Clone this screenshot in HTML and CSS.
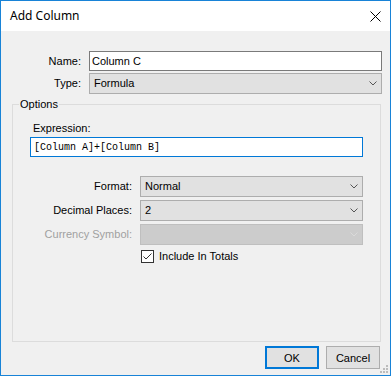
FILE: index.html
```html
<!DOCTYPE html>
<html lang="en">
<head>
    <meta charset="UTF-8">
    <title>Add Column</title>
    <link rel="stylesheet" href="styles.css">
</head>
<body>
    <div class="window">
        <div class="titlebar">
            <span class="title">Add Column</span>
            <svg class="close" width="11" height="11" viewBox="0 0 11 11">
                <path d="M0.5 0.5 L10.5 10.5 M10.5 0.5 L0.5 10.5" stroke="#000" stroke-width="1" fill="none"/>
            </svg>
        </div>

        <div class="content">
            <div class="top-grid">
                <label class="lbl">Name:</label>
                <input class="textbox" type="text" value="Column C">
                <label class="lbl">Type:</label>
                <div class="combo">
                    <span>Formula</span>
                    <svg class="chevron" width="8" height="5" viewBox="0 0 8 5"><path d="M0.5 0.5 L4 4 L7.5 0.5" stroke="currentColor" fill="none"/></svg>
                </div>
            </div>

            <!-- options group -->
            <fieldset class="group">
                <legend>Options</legend>
                <div class="group-inner">
                    <div class="expr-label">Expression:</div>
                    <input class="textbox mono focused" type="text" value="[Column A]+[Column B]">

                    <div class="opt-grid">
                        <label class="lbl">Format:</label>
                        <div class="combo">
                            <span>Normal</span>
                            <svg class="chevron" width="8" height="5" viewBox="0 0 8 5"><path d="M0.5 0.5 L4 4 L7.5 0.5" stroke="currentColor" fill="none"/></svg>
                        </div>
                        <label class="lbl">Decimal Places:</label>
                        <div class="combo">
                            <span>2</span>
                            <svg class="chevron" width="8" height="5" viewBox="0 0 8 5"><path d="M0.5 0.5 L4 4 L7.5 0.5" stroke="currentColor" fill="none"/></svg>
                        </div>
                        <label class="lbl disabled">Currency Symbol:</label>
                        <div class="combo disabled">
                            <span></span>
                            <svg class="chevron" width="8" height="5" viewBox="0 0 8 5"><path d="M0.5 0.5 L4 4 L7.5 0.5" stroke="currentColor" fill="none"/></svg>
                        </div>
                        <span></span>
                        <label class="check">
                            <svg class="box" width="13" height="13" viewBox="0 0 13 13">
                                <rect x="0.5" y="0.5" width="12" height="12" fill="#fff" stroke="#333"/>
                                <path d="M2.5 6.5 L5 9 L10.5 3.5" stroke="#333" stroke-width="1" fill="none"/>
                            </svg>
                            <span>Include In Totals</span>
                        </label>
                    </div>
                </div>
            </fieldset>

            <div class="buttons">
                <button class="btn default">OK</button>
                <button class="btn">Cancel</button>
            </div>
        </div>

        <svg class="grip" width="9" height="9" viewBox="0 0 9 9">
            <rect x="6" y="0" width="2" height="2"/>
            <rect x="3" y="3" width="2" height="2"/>
            <rect x="6" y="3" width="2" height="2"/>
            <rect x="0" y="6" width="2" height="2"/>
            <rect x="3" y="6" width="2" height="2"/>
            <rect x="6" y="6" width="2" height="2"/>
        </svg>
    </div>
</body>
</html>
```

FILE: styles.css
```css
* {
    box-sizing: border-box;
}
body {
    margin: 0;
    font-family: 'Liberation Sans', Arial, sans-serif;
    font-size: 11px;
    line-height: 13px;
    color: #000;
}
.window {
    position: relative;
    width: 391px;
    height: 376px;
    border: 1px solid #1883d7;
    display: flex;
    flex-direction: column;
    background-color: #f0f0f0;
}
.titlebar {
    height: 30px;
    background-color: #fff;
    display: flex;
    align-items: center;
    justify-content: space-between;
    padding: 0 9px 0 8px;
}
.title {
    font-family: 'Noto Sans', 'Open Sans', sans-serif;
    font-size: 12px;
    line-height: 16px;
    padding-left: 1px;
}
.close {
    display: block;
}
.content {
    flex: 1;
    min-height: 0;
    display: flex;
    flex-direction: column;
    padding: 20px 8px 6px 11px;
}
.top-grid {
    display: grid;
    grid-template-columns: 69px 1fr;
    grid-template-rows: 20px 21px;
    column-gap: 8px;
    row-gap: 2px;
}
.lbl {
    text-align: right;
    align-self: center;
    white-space: nowrap;
}
.lbl.disabled {
    color: #a0a0a0;
}
.textbox {
    height: 20px;
    width: 100%;
    border: 1px solid #7a7a7a;
    background-color: #fff;
    padding: 0 2px;
    margin: 0;
    font-family: 'Liberation Sans', Arial, sans-serif;
    font-size: 11px;
    color: #000;
    outline: none;
}
.textbox.mono {
    font-family: 'Liberation Mono', 'Courier New', monospace;
    font-size: 10px;
    padding: 0 3px;
}
.textbox.focused {
    border-color: #0078d7;
}
.combo {
    height: 21px;
    border: 1px solid #adadad;
    background-color: #e1e1e1;
    display: flex;
    align-items: center;
    justify-content: space-between;
    padding: 0 4px 0 4px;
    color: #000;
}
.combo .chevron {
    color: #555;
    display: block;
}
.combo.disabled {
    background-color: #cccccc;
    border-color: #bfbfbf;
}
.combo.disabled .chevron {
    color: #dadada;
}
.group {
    flex: 1;
    min-height: 0;
    margin: 4px 1px 0 0;
    padding: 0;
    border: 1px solid #dcdcdc;
}
.group legend {
    margin-left: 6px;
    padding: 0 1px;
    line-height: 13px;
}
.group-inner {
    padding: 11px 17px 0 17px;
}
.expr-label {
    padding-left: 3px;
    margin-bottom: 2px;
}
.opt-grid {
    margin-top: 19px;
    display: grid;
    grid-template-columns: 102px 1fr;
    grid-auto-rows: 21px;
    column-gap: 8px;
    row-gap: 3px;
}
.check {
    display: flex;
    align-items: center;
    gap: 5px;
    margin-top: 2px;
    padding-left: 1px;
    height: 13px;
}
.check .box {
    display: block;
    flex-shrink: 0;
}
.buttons {
    display: flex;
    justify-content: flex-end;
    gap: 7px;
    margin-top: 4px;
    padding-right: 2px;
}
.btn {
    width: 54px;
    height: 23px;
    border: 1px solid #adadad;
    background-color: #e1e1e1;
    font-family: 'Liberation Sans', Arial, sans-serif;
    font-size: 11px;
    color: #000;
    padding: 0;
}
.btn.default {
    border: 2px solid #0078d7;
}
.grip {
    position: absolute;
    right: 1px;
    bottom: 1px;
    fill: #bcbcbc;
}
```
